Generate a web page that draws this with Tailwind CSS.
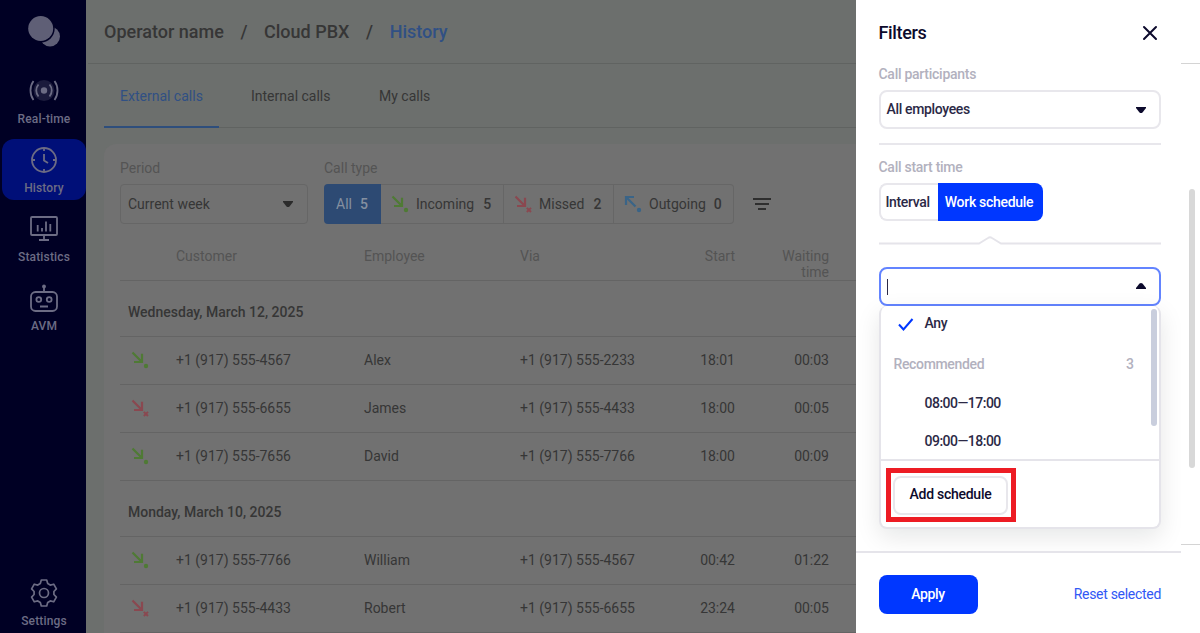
<!DOCTYPE html>
<html lang="en">
<head>
  <meta charset="UTF-8">
  <meta name="viewport" content="width=device-width, initial-scale=1.0">
  <title>Call history</title>
  <script src="https://cdn.jsdelivr.net/npm/@tailwindcss/browser@4"></script>
</head>
<body class="flex h-[633px] w-[1200px] overflow-hidden bg-[#6c6f6d] font-['Roboto',sans-serif] text-sm text-[#363636]">

  <!-- icons -->
  <svg class="hidden">
    <symbol id="incoming" viewBox="0 0 18 18">
      <path d="M1.5 1.5 11 11M11 2.8V11H3" fill="none" stroke="#4f7a35" stroke-width="2.200"/>
      <circle cx="15" cy="15" r="2.200" fill="#4f7a35"/>
    </symbol>
    <symbol id="missed" viewBox="0 0 18 18">
      <path d="M1.5 1.5 11 11M11 2.8V11H3" fill="none" stroke="#8a4850" stroke-width="2.200"/>
      <path d="m12.800 12.800 4.200 4.200m0-4.200L12.800 17" fill="none" stroke="#8a4850" stroke-width="1.900"/>
    </symbol>
    <symbol id="outgoing" viewBox="0 0 18 18">
      <path d="M11.5 11.5 2 2M2 10V2h8" fill="none" stroke="#3a6487" stroke-width="2.200"/>
      <circle cx="15" cy="15" r="2.200" fill="#3a6487"/>
    </symbol>
  </svg>

  <!-- sidebar -->
  <aside class="flex w-[86px] shrink-0 flex-col bg-[#000024] text-xs font-medium tracking-[0.15px] text-[#6c6c84]">
    <div class="flex h-[70px] justify-center pt-[15px] pl-px">
      <svg class="h-8 w-8" viewBox="0 0 32 32" fill="#5f5f76">
        <circle cx="22" cy="21.5" r="10"/>
        <circle cx="12.7" cy="13.5" r="14" fill="#000024"/>
        <circle cx="12.7" cy="13.5" r="12.5"/>
      </svg>
    </div>
    <nav class="flex grow flex-col gap-2 pl-0.5">
      <a class="flex h-[61px] flex-col items-center pt-1.5">
        <svg class="h-[30px] w-[30px]" viewBox="0 0 30 30" fill="none" stroke="#6c6c84" stroke-width="1.800">
          <circle cx="15" cy="14.5" r="10.5" fill="#1b1b3c" stroke="none"/>
          <circle cx="15" cy="14.5" r="3.200" fill="#6c6c84" stroke="none"/>
          <path d="M9.500 8.500c-3 3.500-3 8.500 0 12M20.500 8.500c3 3.500 3 8.500 0 12M4.500 5c-4 5.500-4 13.500 0 19M25.500 5c4 5.500 4 13.500 0 19"/>
        </svg>
        <span class="mt-1.5 leading-[14px]">Real-time</span>
      </a>
      <a class="flex h-[61px] flex-col items-center rounded-xl bg-[#000f78] pt-1.5">
        <svg class="h-[30px] w-[30px]" viewBox="0 0 30 30" fill="none" stroke="#6c6c84" stroke-width="1.800">
          <circle cx="15" cy="15" r="12"/>
          <path d="M15 3v3M15 24v3M3 15h3M24 15h3M15 9v6.500l4 2.500"/>
        </svg>
        <span class="mt-1.5 leading-[14px]">History</span>
      </a>
      <a class="flex h-[61px] flex-col items-center pt-1.5">
        <svg class="h-[30px] w-[30px]" viewBox="0 0 30 30" fill="none" stroke="#6c6c84" stroke-width="1.800">
          <rect x="2" y="3" width="26" height="18" rx="1"/>
          <path d="M15 21v5M10 26h10M8.700 11v6.500M13 14v3.500M17 7.500v10M21.300 10v7.500"/>
        </svg>
        <span class="mt-1.5 leading-[14px]">Statistics</span>
      </a>
      <a class="flex h-[61px] flex-col items-center pt-1.5">
        <svg class="h-[30px] w-[30px]" viewBox="0 0 30 30" fill="none" stroke="#6c6c84" stroke-width="1.800">
          <rect x="2" y="9" width="26" height="19" rx="4.500"/>
          <circle cx="9.800" cy="16.500" r="2.400"/>
          <circle cx="20.200" cy="16.500" r="2.400"/>
          <path d="M11 23.500h8M15 9V4"/>
          <circle cx="15" cy="3.500" r="1.900" fill="#6c6c84" stroke="none"/>
        </svg>
        <span class="mt-1.5 leading-[14px]">AVM</span>
      </a>
      <a class="mt-auto flex h-[61px] flex-col items-center pt-1.5">
        <svg class="h-[30px] w-[30px]" viewBox="0 0 30 30" fill="none" stroke="#6c6c84" stroke-width="1.700" stroke-linejoin="round">
          <path d="M12.300 2h5.400l1 3.600 2.500 1.500 3.500-.9 2.700 4.700-2.500 2.600v3l2.500 2.600-2.700 4.700-3.500-.9-2.500 1.500-1 3.600h-5.400l-1-3.600-2.500-1.500-3.500.9-2.700-4.700 2.500-2.600v-3l-2.500-2.600 2.700-4.700 3.500.9 2.500-1.500z"/>
          <circle cx="15" cy="15" r="4.500"/>
        </svg>
        <span class="mt-1.5 leading-[14px]">Settings</span>
      </a>
    </nav>
  </aside>

  <!-- history page -->
  <main class="flex w-[770px] shrink-0 flex-col overflow-hidden">
    <header class="ml-0.5 flex h-16 shrink-0 items-center gap-[16.600px] border-b border-[#606361] pl-4 text-lg font-medium">
      <span>Operator name</span>
      <span>/</span>
      <span>Cloud PBX</span>
      <span>/</span>
      <span class="text-[#305084]">History</span>
    </header>

    <div class="ml-[18px] flex h-16 shrink-0 border-b border-[#606361]">
      <div class="-mb-px flex h-16 w-[115px] items-center border-b-2 border-[#2e4e7c] px-4 pt-0.5 whitespace-nowrap text-[#305084]">External calls</div>
      <div class="flex w-32 items-center px-8 whitespace-nowrap">Internal calls</div>
      <div class="flex items-center px-8 whitespace-nowrap">My calls</div>
    </div>

    <section class="mt-4 ml-[18px] grow rounded-tl-xl bg-[#717171] pt-4 pl-4">
      <div class="flex items-end gap-4">
        <div>
          <div class="mb-2 h-4 leading-4 text-[#545454]">Period</div>
          <div class="flex h-10 w-[188px] items-center justify-between rounded border border-[#666] pr-[13px] pl-[7px]">
            Current week
            <svg class="h-2 w-3" viewBox="0 0 12 8"><path d="M1 1h10v1L7.500 6.500q-1.500 1.200-3 0L1 2z" fill="#2b2b2b"/></svg>
          </div>
        </div>
        <div>
          <div class="mb-2 h-4 leading-4 text-[#545454]">Call type</div>
          <div class="flex h-10">
            <div class="flex w-[57px] items-center gap-2 rounded-l bg-[#2d4a73] pl-3 text-[#8590a0]">All <span class="font-medium">5</span></div>
            <div class="flex w-[353px] rounded-r border border-l-0 border-[#666]">
              <div class="flex w-[123px] items-center border-r border-[#666] pl-2.5">
                <svg class="mr-[7px] h-[18px] w-[18px]"><use href="#incoming"/></svg>Incoming <span class="ml-[9px] font-medium">5</span>
              </div>
              <div class="flex w-[110px] items-center border-r border-[#666] pl-2.5">
                <svg class="mr-[7px] h-[18px] w-[18px]"><use href="#missed"/></svg>Missed <span class="ml-[9px] font-medium">2</span>
              </div>
              <div class="flex grow items-center pl-2.5">
                <svg class="mr-[7px] h-[18px] w-[18px]"><use href="#outgoing"/></svg>Outgoing <span class="ml-2 font-medium">0</span>
              </div>
            </div>
          </div>
        </div>
        <svg class="mb-2.5 ml-0.5 h-5 w-5" viewBox="0 0 20 20" stroke="#2e2e2e" stroke-width="2"><path d="M1 5h18M3 10h14M6 15h8"/></svg>
      </div>

      <div class="grid h-[57px] grid-cols-[56px_188px_156px_144px_71px_94px] border-b border-[#646464] pt-6 leading-4 text-[#545454]">
        <span></span>
        <span>Customer</span>
        <span>Employee</span>
        <span>Via</span>
        <span class="text-right">Start</span>
        <span class="text-right">Waiting<br>time</span>
      </div>
      <div id="calls"></div>
    </section>
  </main>

  <!-- filters -->
  <aside class="flex w-[325px] shrink-0 flex-col overflow-hidden bg-white font-medium tracking-[-0.35px] text-[#2b2946]">
    <div class="h-[551px] shrink-0 overflow-hidden pr-5 pl-[22.500px]">
      <div class="flex h-[66px] items-center justify-between pr-[3px]">
        <h2 class="text-lg font-medium text-[#0c0a2c]">Filters</h2>
        <svg class="h-4 w-4" viewBox="0 0 16 16" fill="none" stroke="#0c0a2c" stroke-width="2" stroke-linecap="round"><path d="m2 2 12 12M14 2 2 14"/></svg>
      </div>
      <div class="h-4 leading-4 tracking-[-0.27px] text-[#b2b1be]">Call participants</div>
      <div class="mt-2 flex h-[39px] items-center justify-between rounded-lg border-2 border-[#e8e7ec] pr-3 pb-0.5 pl-1.5">
        All employees
        <svg class="mt-0.5 h-2 w-3" viewBox="0 0 12 8"><path d="M1 1h10v1L7.500 6.500q-1.500 1.200-3 0L1 2z" fill="#0c0a2c"/></svg>
      </div>
      <div class="mt-3.5 border-t-2 border-[#e8e7ec]"></div>
      <div class="mt-3.5 h-4 leading-4 tracking-[-0.27px] text-[#b2b1be]">Call start time</div>
      <div class="mt-2 flex h-[38px] w-[164px]">
        <div class="flex w-[59px] items-center rounded-l-lg border-2 border-r-0 border-[#e8e7ec] pl-[5px]">Interval</div>
        <div class="flex grow items-center justify-center rounded-r-lg bg-[#0037ff] pr-0.5 tracking-[-0.3px] whitespace-nowrap text-white">Work schedule</div>
      </div>
      <svg class="mt-3.5 h-3 w-[282px]" viewBox="0 0 282 12" fill="none" stroke="#e5e4ea" stroke-width="1.800"><path d="M0 8.500h100l9-5.500q2-1.500 4 0l9 5.500h160"/></svg>

      <div class="mt-5 flex h-[39px] items-center justify-between rounded-lg border-2 border-[#6384ff] pr-3 pl-1.5">
        <span class="h-4 w-px bg-[#2b2946]"></span>
        <svg class="mb-0.5 h-2 w-3" viewBox="0 0 12 8"><path d="M1 7h10V6L7.500 1.500q-1.500-1.200-3 0L1 6z" fill="#0c0a2c"/></svg>
      </div>
      <div class="h-[223px] rounded-lg border-2 border-t-0 border-[#e5e4ea] bg-white shadow-[0_8px_24px_rgba(0,20,20,0.1)]">
        <div class="flex h-[153px] justify-between pt-0.5 pr-0.5">
          <div class="w-[255px] pl-[13px]">
            <div class="flex h-[30px] items-center">
              <svg class="mt-0.5 mr-[11px] ml-1 h-4 w-4" viewBox="0 0 16 16" fill="none" stroke="#0037ff" stroke-width="2"><path d="m1 8.500 4.500 5L14.500 3"/></svg>
              Any
            </div>
            <div class="mt-4 flex h-5 items-center justify-between pr-0.5 text-[#b2b1be]"><span>Recommended</span><span>3</span></div>
            <div class="mt-2.5 flex h-[38px] items-center pl-[31px] tracking-[-0.5px]">08:00—17:00</div>
            <div class="flex h-[38px] items-center pl-[31px] tracking-[-0.5px]">09:00—18:00</div>
          </div>
          <div class="mt-px h-[117px] w-1.5 rounded-full bg-[#c9cedd]"></div>
        </div>
        <div class="border-t-2 border-[#e5e4ea] pt-[7px] pl-[5px]">
          <!-- highlighted action -->
          <div class="flex h-[54px] w-[130px] items-center justify-center border-5 border-[#ed1c24]">
            <button class="h-[39px] w-[115px] rounded-lg border-2 border-[#e8e7ec] pb-0.5 tracking-[-0.27px] text-[#0c0a2c]">Add schedule</button>
          </div>
        </div>
      </div>
    </div>
    <div class="flex grow items-center justify-between border-t-2 border-[#e5e4ea] pt-[3px] pr-5 pl-[22.500px]">
      <button class="h-[39px] w-[99px] rounded-lg bg-[#0037ff] pb-0.5 text-white">Apply</button>
      <a class="pb-0.5 font-normal tracking-[-0.3px] text-[#3158f5]">Reset selected</a>
    </div>
  </aside>

  <!-- page edge -->
  <div class="flex w-[19px] shrink-0 flex-col bg-white">
    <div class="h-16 border-b border-[#d4d4d4]"></div>
    <div class="h-[481px] border-b border-[#d4d4d4] pt-[125px] pl-2">
      <div class="h-[279px] w-1.5 rounded-full bg-[#d8d8d8]"></div>
    </div>
  </div>

  <script>
    const days = [
      { date: 'Wednesday, March 12, 2025', calls: [
        ['incoming', '+1 (917) 555-4567', 'Alex', '+1 (917) 555-2233', '18:01', '00:03'],
        ['missed', '+1 (917) 555-6655', 'James', '+1 (917) 555-4433', '18:00', '00:05'],
        ['incoming', '+1 (917) 555-7656', 'David', '+1 (917) 555-7766', '18:00', '00:09']
      ]},
      { date: 'Monday, March 10, 2025', calls: [
        ['incoming', '+1 (917) 555-7766', 'William', '+1 (917) 555-4567', '00:42', '01:22'],
        ['missed', '+1 (917) 555-4433', 'Robert', '+1 (917) 555-6655', '23:24', '00:05']
      ]}
    ];

    document.getElementById('calls').innerHTML = days.map(day => `
      <div class="flex h-14 items-center border-b border-[#646464] pt-1.5 pl-2 font-medium">${day.date}</div>
      ${day.calls.map(([type, customer, employee, via, start, waiting]) => `
        <div class="grid h-12 grid-cols-[56px_188px_156px_144px_71px_94px] items-center border-b border-[#646464] pb-px">
          <svg class="ml-[11px] h-[18px] w-[18px]"><use href="#${type}"/></svg>
          <span>${customer}</span>
          <span>${employee}</span>
          <span>${via}</span>
          <span class="text-right">${start}</span>
          <span class="text-right">${waiting}</span>
        </div>
      `).join('')}
    `).join('');
  </script>
</body>
</html>
